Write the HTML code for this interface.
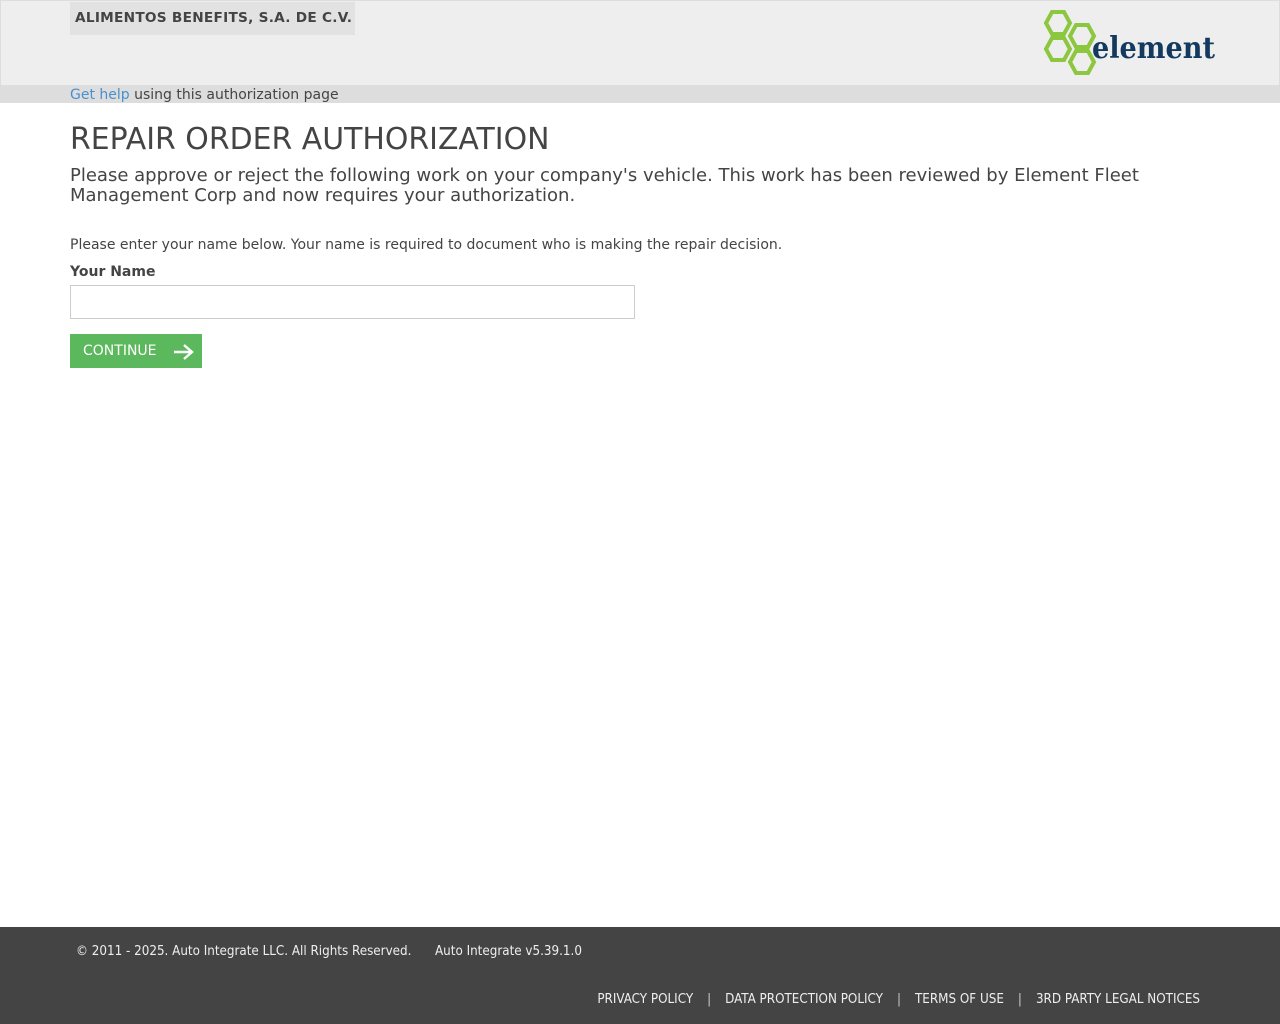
<!DOCTYPE html>
<html><head><meta charset="utf-8"><style>
body{margin:0;width:1280px;height:1024px;position:relative;background:#fff;font-family:"DejaVu Sans","Liberation Sans",sans-serif;color:#444;overflow:hidden}
.hdr{position:absolute;left:0;top:0;width:1278px;height:84px;background:#eee;border:1px solid #ddd}
.band{position:absolute;left:0;top:86px;width:1280px;height:17px;background:#ddd}
.co{position:absolute;left:70px;top:3px;width:285px;height:32px;background:#e2e2e2;font-weight:bold;font-size:13.7px;line-height:31px;text-indent:5px;color:#444;letter-spacing:0.25px}
.co2{position:absolute;left:70px;top:2px;width:285px;height:1px;background:#e2e2e2}
.help{position:absolute;left:70px;top:86px;font-size:14px;line-height:18px;color:#444}
.help a{color:#4a8fd0;text-decoration:none}
h1{position:absolute;left:70px;top:123px;margin:0;font-weight:normal;font-size:29.9px;line-height:34px;color:#444}
.lead{position:absolute;left:70px;top:166px;width:1120px;font-size:18px;line-height:20px;margin:0}
.p{position:absolute;left:70px;top:236px;font-size:14px;line-height:18px;margin:0}
.lbl{position:absolute;left:70px;top:263px;font-size:14px;font-weight:bold;line-height:18px}
.inp{position:absolute;left:70px;top:285px;width:563px;height:32px;border:1px solid #ccc;background:#fff}
.btn{position:absolute;left:70px;top:334px;width:132px;height:34px;background:#5cb85c;color:#fff;font-size:14px;line-height:34px}
.btn span{position:absolute;left:13px}
.btn svg{position:absolute;left:103px;top:9px}
.ft{position:absolute;left:0;top:927px;width:1280px;height:97px;background:#444;color:#eee;font-family:"DejaVu Sans Condensed","DejaVu Sans",sans-serif;font-stretch:condensed;font-size:13.3px}
.ft .c{position:absolute;left:76px;top:17px}
.ft .v{position:absolute;left:435px;top:17px}
.ft .l{position:absolute;right:80px;top:65px;white-space:nowrap}
.ft .l i{font-style:normal;margin:0 14px;color:#ccc}
</style></head><body>
<div class="hdr"></div>
<div class="band"></div>
<div class="co">ALIMENTOS BENEFITS, S.A. DE C.V.</div>
<div class="co2"></div>
<svg style="position:absolute;left:1040px;top:8px" width="180" height="70" viewBox="0 0 180 70">
<g fill="none" stroke="#8dc63f" stroke-width="4">
<polygon points="12,4 24,4 30,15 24,26 12,26 6,15"/>
<polygon points="36,17 48,17 54,28 48,39 36,39 30,28"/>
<polygon points="12,30 24,30 30,41 24,52 12,52 6,41"/>
<polygon points="36,43 48,43 54,54 48,65 36,65 30,54"/>
</g>
<text x="52" y="50" font-family="DejaVu Serif,Liberation Serif,serif" font-weight="bold" font-size="30" fill="#133a5e" textLength="123" lengthAdjust="spacingAndGlyphs">element</text>
</svg>
<div class="help"><a>Get help</a> using this authorization page</div>
<h1>REPAIR ORDER AUTHORIZATION</h1>
<p class="lead">Please approve or reject the following work on your company's vehicle. This work has been reviewed by Element Fleet Management Corp and now requires your authorization.</p>
<p class="p">Please enter your name below. Your name is required to document who is making the repair decision.</p>
<div class="lbl">Your Name</div>
<div class="inp"></div>
<div class="btn"><span>CONTINUE</span><svg width="22" height="18" viewBox="0 0 22 18"><path d="M1 9H19M11 2L19 9L11 16" fill="none" stroke="#fff" stroke-width="2.4"/></svg></div>
<div class="ft">
<div class="c">© 2011 - 2025. Auto Integrate LLC. All Rights Reserved.</div>
<div class="v">Auto Integrate v5.39.1.0</div>
<div class="l">PRIVACY POLICY<i>|</i>DATA PROTECTION POLICY<i>|</i>TERMS OF USE<i>|</i>3RD PARTY LEGAL NOTICES</div>
</div>
</body></html>
